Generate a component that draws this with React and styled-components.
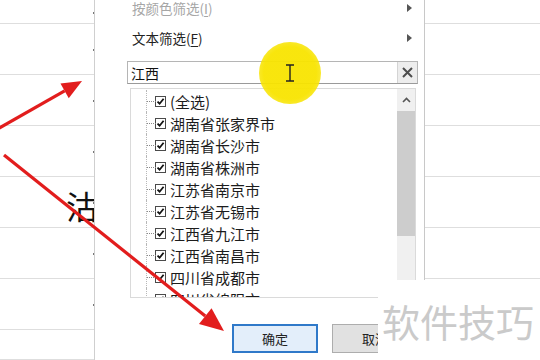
import React from 'react';
import styled, { createGlobalStyle } from 'styled-components';

const GlobalStyle = createGlobalStyle`
  html, body {
    margin: 0;
    padding: 0;
    background: #ffffff;
  }
  body {
    width: 540px;
    height: 360px;
    overflow: hidden;
    font-family: "Noto Sans CJK SC", "Noto Sans", sans-serif;
  }
  * { box-sizing: border-box; }
`;

const Screen = styled.div`
  position: relative;
  width: 540px;
  height: 360px;
  display: flex;
  overflow: hidden;
  background: #ffffff;
`;

const SheetColumn = styled.div`
  width: ${(p) => p.$width}px;
  flex-shrink: 0;
  display: grid;
  grid-template-rows: 24px repeat(6, 51px) 1fr;
  border-right: ${(p) => (p.$edge ? '1px solid #cfcfcf' : 'none')};
`;

const Cell = styled.div`
  position: relative;
  border-bottom: 1px solid #dedede;
  display: flex;
  align-items: center;
  justify-content: flex-end;
  overflow: hidden;

  &::after {
    content: '';
    display: ${(p) => (p.$tick ? 'block' : 'none')};
    position: absolute;
    right: -1px;
    top: 50%;
    width: 2px;
    height: 2px;
    background: #777;
  }
`;

const BigChar = styled.span`
  font-size: 32px;
  line-height: 1;
  color: #111;
  margin-right: -4px;
  margin-top: 6px;
`;

const Panel = styled.div`
  width: 330px;
  flex-shrink: 0;
  border-right: 1px solid #c8c8c8;
  padding: 0 6px 0 32px;
  display: flex;
  flex-direction: column;
  background: #ffffff;
`;

const MenuItem = styled.div`
  height: 30px;
  flex-shrink: 0;
  display: flex;
  align-items: center;
  justify-content: space-between;
  padding: 0 6px 0 5px;
  font-size: 13.5px;
  color: ${(p) => (p.$disabled ? '#a6a6a6' : '#222')};
  margin-top: ${(p) => (p.$first ? '-7px' : '0')};
`;

const Key = styled.span`
  text-decoration: underline;
  text-underline-offset: 2px;
`;

const SubArrow = styled.span`
  width: 0;
  height: 0;
  border-top: 4px solid transparent;
  border-bottom: 4px solid transparent;
  border-left: 5px solid #555;
`;

const SearchBox = styled.div`
  margin-top: 8px;
  height: 23px;
  flex-shrink: 0;
  display: flex;
  border: 1px solid #b5b5b5;
  border-bottom-color: #9a9a9a;
`;

const SearchText = styled.div`
  flex: 1;
  display: flex;
  align-items: center;
  padding-left: 3px;
  font-size: 14px;
  color: #111;
`;

const ClearButton = styled.div`
  width: 20px;
  background: #ededed;
  border-left: 1px solid #d4d4d4;
  display: flex;
  align-items: center;
  justify-content: center;
`;

const ListBox = styled.div`
  margin: 4px 2px 0 3px;
  height: 210px;
  flex-shrink: 0;
  display: flex;
  border: 1px solid #dadada;
  overflow: hidden;
`;

const Items = styled.div`
  flex: 1;
  padding: 1px 0 0 15px;
  overflow: hidden;
`;

const Row = styled.div`
  height: 22px;
  display: flex;
  align-items: center;
  font-size: 15px;
  color: #1c1c1c;
  white-space: nowrap;
`;

const Branch = styled.span`
  position: relative;
  width: 9px;
  height: 100%;
  border-left: 1px dotted #b8b8b8;

  &::after {
    content: '';
    position: absolute;
    left: 0;
    top: 50%;
    width: 9px;
    border-top: 1px dotted #8a8a8a;
  }
`;

const Check = styled.span`
  width: 11px;
  height: 11px;
  border: 1px solid #4a4a4a;
  background: #fff;
  display: flex;
  align-items: center;
  justify-content: center;
  margin-right: 4px;
`;

const ScrollBar = styled.div`
  width: 18px;
  background: #f0f0f0;
  display: flex;
  flex-direction: column;
`;

const ScrollButton = styled.div`
  height: 22px;
  display: flex;
  align-items: center;
  justify-content: center;
`;

const Thumb = styled.div`
  height: 125px;
  background: #cdcdcd;
`;

const Buttons = styled.div`
  margin-top: 26px;
  width: 251px;
  padding-left: 105px;
  display: flex;
  gap: 14px;
  overflow: hidden;
`;

const Button = styled.div`
  width: 86px;
  height: 29px;
  flex-shrink: 0;
  display: flex;
  align-items: center;
  justify-content: center;
  font-size: 13px;
  color: #222;
  background: ${(p) => (p.$primary ? '#e3eefa' : '#e1e1e1')};
  border: ${(p) => (p.$primary ? '2px solid #2f79c9' : '1px solid #adadad')};
`;

const Spotlight = styled.div`
  position: absolute;
  left: 259px;
  top: 42px;
  width: 62px;
  height: 62px;
  border-radius: 50%;
  background: radial-gradient(circle, rgba(248, 228, 0, 0.95) 60%, rgba(248, 228, 0, 0.75) 80%, rgba(248, 228, 0, 0) 100%);
  display: flex;
  align-items: center;
  justify-content: center;
`;

const Watermark = styled.div`
  position: absolute;
  left: 378px;
  top: 280px;
  width: 162px;
  height: 80px;
  background: #ffffff;
  display: flex;
  align-items: center;
  justify-content: flex-end;
  padding-right: 6px;
  font-size: 38px;
  color: #cacaca;
`;

const Annotations = styled.svg`
  position: absolute;
  left: 0;
  top: 0;
  pointer-events: none;
`;

const cities = [
  '(全选)',
  '湖南省张家界市',
  '湖南省长沙市',
  '湖南省株洲市',
  '江苏省南京市',
  '江苏省无锡市',
  '江西省九江市',
  '江西省南昌市',
  '四川省成都市',
  '四川省绵阳市',
];

const Tick = () => (
  <svg width="9" height="9" viewBox="0 0 9 9">
    <path d="M1.5 4.6 L3.6 6.7 L7.6 1.8" fill="none" stroke="#111" strokeWidth="1.8" />
  </svg>
);

const Arrow = ({ x1, y1, x2, y2, head }) => {
  const a = Math.atan2(y2 - y1, x2 - x1);
  const bx = x2 - head * Math.cos(a);
  const by = y2 - head * Math.sin(a);
  const w = head * 0.42;
  const px = -Math.sin(a) * w;
  const py = Math.cos(a) * w;
  return (
    <g>
      <line x1={x1} y1={y1} x2={bx} y2={by} stroke="#e21d1d" strokeWidth="3.2" />
      <polygon
        points={`${x2},${y2} ${bx + px},${by + py} ${bx - px},${by - py}`}
        fill="#e21d1d"
      />
    </g>
  );
};

export default function App() {
  const rows = [0, 1, 2, 3, 4, 5, 6, 7];
  return (
    <>
      <GlobalStyle />
      <Screen>
        <SheetColumn $width={95} $edge>
          {rows.map((r) => (
            <Cell key={r} $tick={r < 7}>
              {r === 4 && <BigChar>沽</BigChar>}
            </Cell>
          ))}
        </SheetColumn>

        <Panel>
          <MenuItem $first $disabled>
            <span>按颜色筛选(<Key>I</Key>)</span>
            <SubArrow />
          </MenuItem>
          <MenuItem>
            <span>文本筛选(<Key>F</Key>)</span>
            <SubArrow />
          </MenuItem>
          <SearchBox>
            <SearchText>江西</SearchText>
            <ClearButton>
              <svg width="11" height="11" viewBox="0 0 11 11">
                <path d="M1 1 L10 10 M10 1 L1 10" stroke="#4d4d4d" strokeWidth="2" />
              </svg>
            </ClearButton>
          </SearchBox>
          <ListBox>
            <Items>
              {cities.map((c) => (
                <Row key={c}>
                  <Branch />
                  <Check>
                    <Tick />
                  </Check>
                  {c}
                </Row>
              ))}
            </Items>
            <ScrollBar>
              <ScrollButton>
                <svg width="9" height="6" viewBox="0 0 9 6">
                  <path d="M1 5 L4.5 1.5 L8 5" fill="none" stroke="#555" strokeWidth="1.6" />
                </svg>
              </ScrollButton>
              <Thumb />
            </ScrollBar>
          </ListBox>
          <Buttons>
            <Button $primary>确定</Button>
            <Button>取消</Button>
          </Buttons>
        </Panel>

        <SheetColumn $width={115}>
          {rows.map((r) => (
            <Cell key={r} />
          ))}
        </SheetColumn>

        <Spotlight>
          <svg width="10" height="18" viewBox="0 0 10 18">
            <path d="M1 1 H9 M5 1 V17 M1 17 H9" fill="none" stroke="#222" strokeWidth="1.4" />
          </svg>
        </Spotlight>

        <Annotations width="540" height="360" viewBox="0 0 540 360">
          <Arrow x1={-6} y1={131} x2={82} y2={81} head={20} />
          <Arrow x1={4} y1={155} x2={224} y2={331} head={24} />
        </Annotations>

        <Watermark>软件技巧</Watermark>
      </Screen>
    </>
  );
}
